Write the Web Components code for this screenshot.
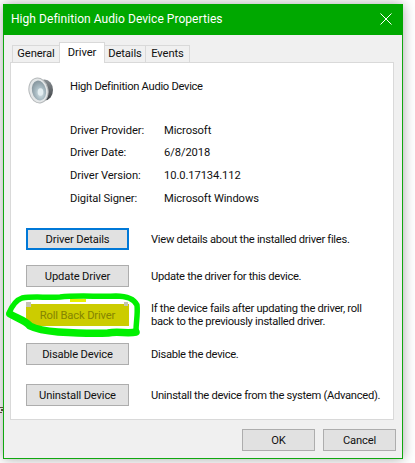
<!DOCTYPE html>
<html>
<head>
<meta charset="utf-8">
<title>High Definition Audio Device Properties</title>
<style>
  html, body { margin: 0; padding: 0; background: #fff; }
  body { width: 415px; height: 463px; overflow: hidden; font: 11.2px Roboto, "Liberation Sans", Arial, sans-serif; letter-spacing: -0.3px; color: #111; position: relative; }
</style>
</head>
<body>
<prop-dialog heading="High Definition Audio Device Properties">
  <tab-strip slot="tabs">
    <tab-item style="width:48px">General</tab-item>
    <tab-item selected style="width:46px">Driver</tab-item>
    <tab-item style="width:42px">Details</tab-item>
    <tab-item style="width:45px">Events</tab-item>
  </tab-strip>

  <device-head>High Definition Audio Device</device-head>

  <info-list>
    <info-row label="Driver Provider:">Microsoft</info-row>
    <info-row label="Driver Date:">6/8/2018</info-row>
    <info-row label="Driver Version:">10.0.17134.112</info-row>
    <info-row label="Digital Signer:">Microsoft Windows</info-row>
  </info-list>

  <action-row label="Driver Details" focused style="margin-top:23px">View details about the installed driver files.</action-row>
  <action-row label="Update Driver" style="margin-top:15px">Update the driver for this device.</action-row>
  <action-row label="Roll Back Driver" marked style="margin-top:15px">If the device fails after updating the driver, roll<br>back to the previously installed driver.</action-row>
  <action-row label="Disable Device" style="margin-top:19px">Disable the device.</action-row>
  <action-row label="Uninstall Device" style="margin-top:19px">Uninstall the device from the system (Advanced).</action-row>

  <win-button slot="footer" style="width:73px">OK</win-button>
  <win-button slot="footer" style="width:73px">Cancel</win-button>
</prop-dialog>
<scribble-mark></scribble-mark>

<script>
class PropDialog extends HTMLElement {
  constructor() {
    super();
    this.attachShadow({ mode: "open" });
    const heading = this.getAttribute("heading");
    this.shadowRoot.innerHTML = `
      <style>
        :host {
          display: flex;
          flex-direction: column;
          box-sizing: border-box;
          width: 400px;
          height: 455px;
          margin: 4px 0 0 3px;
          background: #f0f0f0;
          border: 1px solid #10a810;
          border-top: 0;
          box-shadow: 0 0 12px rgba(0,0,0,0.35);
        }
        #title {
          display: flex;
          align-items: center;
          justify-content: space-between;
          height: 31px;
          background: #00a800;
          color: #fff;
          font-size: 12px;
          letter-spacing: 0.05px;
          padding: 0 10px 2px 8px;
          box-sizing: border-box;
          margin: 0 -1px;
          flex: none;
        }
        #title svg { display: block; margin-right: 1px; }
        #tabs { margin: 8px 0 0 9px; height: 19px; flex: none; }
        #panel {
          box-sizing: border-box;
          width: 384px;
          height: 358px;
          margin-left: 6px;
          background: #fff;
          border: 1px solid #d9d9d9;
          padding: 0 0 0 15px;
          flex: none;
        }
        #footer {
          display: flex;
          justify-content: flex-end;
          gap: 8px;
          margin-top: 9px;
          padding-right: 6px;
        }
      </style>
      <div id="title">
        <span>${heading}</span>
        <svg width="12" height="12" viewBox="0 0 12 12"><path d="M.5.5l11 11M11.500.5l-11 11" stroke="#fff" stroke-width="1" fill="none"/></svg>
      </div>
      <div id="tabs"><slot name="tabs"></slot></div>
      <div id="panel"><slot></slot></div>
      <div id="footer"><slot name="footer"></slot></div>
    `;
  }
}
customElements.define("prop-dialog", PropDialog);

class TabStrip extends HTMLElement {
  constructor() {
    super();
    this.attachShadow({ mode: "open" });
    this.shadowRoot.innerHTML = `
      <style>
        :host { display: flex; align-items: flex-end; height: 19px; position: relative; z-index: 1; letter-spacing: -0.1px; }
      </style>
      <slot></slot>
    `;
  }
}
customElements.define("tab-strip", TabStrip);

class TabItem extends HTMLElement {
  constructor() {
    super();
    this.attachShadow({ mode: "open" });
    this.shadowRoot.innerHTML = `
      <style>
        :host {
          display: block;
          box-sizing: border-box;
          height: 17px;
          line-height: 16px;
          text-align: center;
          background: #f0f0f0;
          border: 1px solid #d9d9d9;
          border-bottom: 0;
          margin-left: -1px;
        }
        :host([selected]) {
          height: 21px;
          margin: 0 0 -1px -1px;
          padding-top: 1px;
          line-height: 17px;
          background: #fff;
          position: relative;
          z-index: 2;
        }
      </style>
      <slot></slot>
    `;
  }
}
customElements.define("tab-item", TabItem);

class DeviceHead extends HTMLElement {
  constructor() {
    super();
    this.attachShadow({ mode: "open" });
    this.shadowRoot.innerHTML = `
      <style>
        :host { display: flex; align-items: flex-start; gap: 16px; padding: 13px 0 0 2px; height: 41px; }
        svg { display: block; flex: none; }
        span { padding-top: 4px; }
      </style>
      <svg width="26" height="28" viewBox="0 0 26 28">
        <defs>
          <radialGradient id="cone" cx="0.55" cy="0.65" r="0.6">
            <stop offset="0" stop-color="#d9e6ea"/>
            <stop offset="0.55" stop-color="#a8bac2"/>
            <stop offset="1" stop-color="#8a9aa2"/>
          </radialGradient>
          <linearGradient id="body" x1="0" y1="0" x2="0" y2="1">
            <stop offset="0" stop-color="#8a9094"/>
            <stop offset="1" stop-color="#3c4044"/>
          </linearGradient>
        </defs>
        <ellipse cx="16.500" cy="14" rx="8.500" ry="10.500" fill="url(#body)"/>
        <ellipse cx="10.500" cy="14.500" rx="9.500" ry="12.500" transform="rotate(-12 10.500 14.500)" fill="#e4e7e8" stroke="#b4b8ba" stroke-width="1"/>
        <ellipse cx="11" cy="14.500" rx="7" ry="10" transform="rotate(-12 11 14.500)" fill="url(#cone)"/>
        <ellipse cx="12.500" cy="16" rx="2.800" ry="3.800" fill="#e4eef1"/>
      </svg>
      <span><slot></slot></span>
    `;
  }
}
customElements.define("device-head", DeviceHead);

class InfoList extends HTMLElement {
  constructor() {
    super();
    this.attachShadow({ mode: "open" });
    this.shadowRoot.innerHTML = `
      <style>
        :host { display: grid; row-gap: 8.700px; padding: 6.500px 0 0 44px; margin-bottom: -0.500px; letter-spacing: -0.1px; }
      </style>
      <slot></slot>
    `;
  }
}
customElements.define("info-list", InfoList);

class InfoRow extends HTMLElement {
  constructor() {
    super();
    this.attachShadow({ mode: "open" });
    this.shadowRoot.innerHTML = `
      <style>
        :host { display: grid; grid-template-columns: 94px 1fr; line-height: 14px; }
      </style>
      <span>${this.getAttribute("label")}</span>
      <span><slot></slot></span>
    `;
  }
}
customElements.define("info-row", InfoRow);

class ActionRow extends HTMLElement {
  constructor() {
    super();
    this.attachShadow({ mode: "open" });
    const attrs = (this.hasAttribute("focused") ? " focused" : "") + (this.hasAttribute("marked") ? " marked" : "");
    this.shadowRoot.innerHTML = `
      <style>
        :host { display: grid; grid-template-columns: 103px 1fr; column-gap: 22px; align-items: center; height: 22px; }
        p { margin: 0; line-height: 13px; }
      </style>
      <win-button${attrs} style="width:103px">${this.getAttribute("label")}</win-button>
      <p><slot></slot></p>
    `;
  }
}

class WinButton extends HTMLElement {
  constructor() {
    super();
    this.attachShadow({ mode: "open" });
    this.shadowRoot.innerHTML = `
      <style>
        :host {
          display: flex;
          align-items: center;
          justify-content: center;
          box-sizing: border-box;
          height: 22px;
          background: #e1e1e1;
          border: 1px solid #adadad;
          color: #111;
          letter-spacing: -0.15px;
        }
        :host([focused]) { border: 2px solid #0078d7; }
        :host([marked]) { background: #cccc00; border-color: #cccc00; color: #858500; }
      </style>
      <slot></slot>
    `;
  }
}
customElements.define("win-button", WinButton);
customElements.define("action-row", ActionRow);

class ScribbleMark extends HTMLElement {
  constructor() {
    super();
    this.attachShadow({ mode: "open" });
    this.shadowRoot.innerHTML = `
      <style>
        :host { position: absolute; left: 0; top: 0; width: 415px; height: 463px; pointer-events: none; }
        svg { display: block; }
      </style>
      <svg width="415" height="463" viewBox="0 0 415 463">
        <path d="M0 407h3v1H0zM0 412h2v1H0zM1 409h2v2H1z" fill="#5a4a3a"/>
        <path d="M26 302h5v5h-5zM124 302h4v4h-4z" fill="#c4c4b4"/>
        <path d="M70 299h16v3H70z" fill="#e8f000"/>
        <g fill="none" stroke="#00f000" stroke-linejoin="round" stroke-linecap="round">
          <path d="M9 313 C12 306 16 300 22 298 C34 296 46 298 60 297 C78 295 100 297 116 296 C126 296 134 299 137 305 C138 314 136 322 136 331" stroke-width="5.500"/>
          <path d="M136 332 C128 334 118 331 108 333 C92 334 74 333 58 332 C46 331 36 329 30 326 C25 320 16 318 10 314" stroke-width="7.500"/>
        </g>
      </svg>
    `;
  }
}
customElements.define("scribble-mark", ScribbleMark);
</script>
</body>
</html>
